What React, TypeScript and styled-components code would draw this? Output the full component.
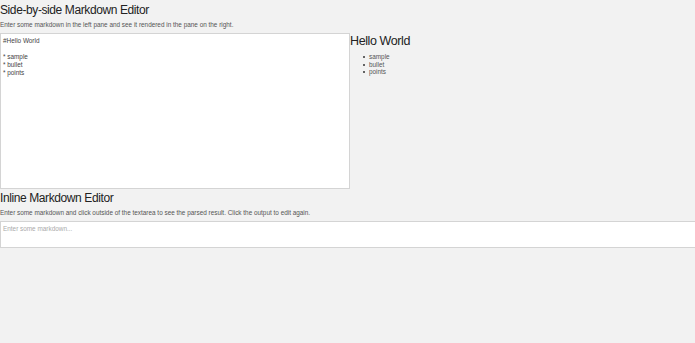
import React from "react";
import styled, { createGlobalStyle } from "styled-components";

const Global = createGlobalStyle`
  html, body { margin: 0; padding: 0; background: #f2f2f2; }
  body { font-family: "Liberation Sans", Arial, sans-serif; color: #222; overflow: hidden; }
`;

const Page = styled.div`
  width: 695px;
  overflow: hidden;
`;

const Title = styled.h2`
  margin: 0;
  padding-top: 3px;
  font-size: 12px;
  letter-spacing: -0.4px;
  line-height: 15px;
  font-weight: normal;
  color: #222;
`;

const Note = styled.p`
  margin: 3px 0 0;
  font-size: 6.4px;
  line-height: 8px;
  color: #555;
`;

const SplitRow = styled.div`
  display: flex;
  margin-top: 4px;
`;

const Source = styled.textarea`
  box-sizing: border-box;
  width: 350px;
  height: 156px;
  margin: 0;
  padding: 3px 2px;
  border: 1px solid #d4d4d4;
  background: #fff;
  font-family: "Liberation Sans", Arial, sans-serif;
  font-size: 6.4px;
  line-height: 8px;
  color: #444;
  resize: none;
  outline: none;
`;

const Preview = styled.div`
  flex: 1;
  padding-top: 1px;
  color: #222;
`;

const PreviewHeading = styled.h1`
  margin: 0;
  font-size: 12.5px;
  letter-spacing: -0.4px;
  line-height: 15px;
  font-weight: normal;
`;

const List = styled.ul`
  margin: 4px 0 0;
  padding-left: 19px;
  list-style: none;
  font-size: 6.4px;
  line-height: 7.6px;
  color: #555;
`;

const Item = styled.li`
  position: relative;
  &::before {
    content: "";
    position: absolute;
    left: -6px;
    top: 3px;
    width: 2px;
    height: 2px;
    border-radius: 50%;
    background: #333;
  }
`;

const SecondTitle = styled(Title)`
  padding-top: 2px;
`;

const InlineBox = styled.textarea`
  box-sizing: border-box;
  display: block;
  width: 700px;
  height: 27px;
  margin: 4px 0 0;
  padding: 3px 2px;
  border: 1px solid #d4d4d4;
  background: #fff;
  font-family: "Liberation Sans", Arial, sans-serif;
  font-size: 6.4px;
  line-height: 8px;
  color: #444;
  resize: none;
  outline: none;
  &::placeholder { color: #aaa; }
`;

export default function App() {
  return (
    <Page>
      <Global />
      <Title>Side-by-side Markdown Editor</Title>
      <Note>Enter some markdown in the left pane and see it rendered in the pane on the right.</Note>
      <SplitRow>
        <Source defaultValue={"#Hello World\n\n* sample\n* bullet\n* points"} />
        <Preview>
          <PreviewHeading>Hello World</PreviewHeading>
          <List>
            <Item>sample</Item>
            <Item>bullet</Item>
            <Item>points</Item>
          </List>
        </Preview>
      </SplitRow>
      <SecondTitle>Inline Markdown Editor</SecondTitle>
      <Note>Enter some markdown and click outside of the textarea to see the parsed result. Click the output to edit again.</Note>
      <InlineBox placeholder="Enter some markdown..." />
    </Page>
  );
}
